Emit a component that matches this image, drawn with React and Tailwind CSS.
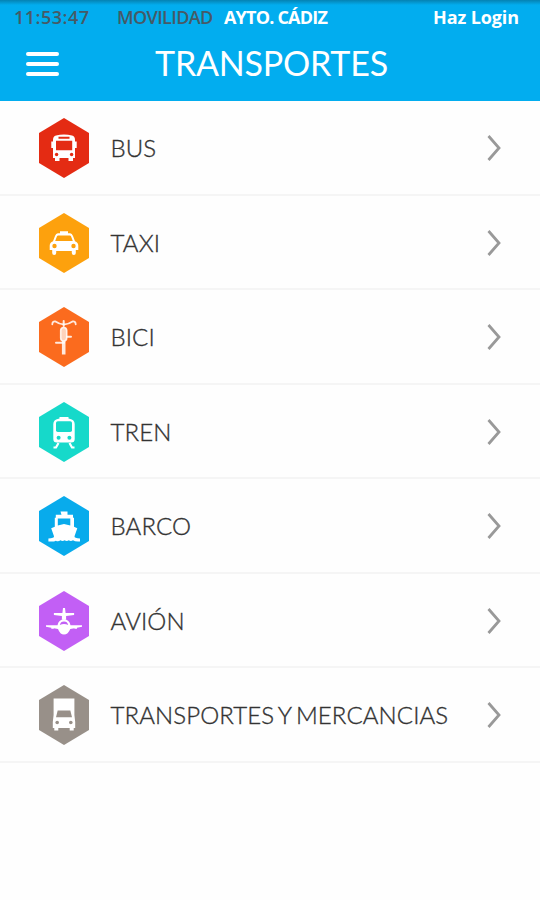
import React from "react";

const icons = {
  bus: (c) => (
    <>
      <path fill="#fff" d="M17 17.5Q25 15.5 33 17.5Q36 18.3 36 22V23.5H37.7V30H36V40H34V43H29.5V40H20.5V43H16V40H14V30H12.3V23.5H14V22Q14 18.3 17 17.5Z" />
      <path fill={c} d="M19.5 18.7h11v2h-11zM17 22.7h16.2v9.6H17z" />
      <circle cx="17.6" cy="36.5" r="1.7" fill={c} />
      <circle cx="32.6" cy="36.5" r="1.7" fill={c} />
    </>
  ),
  taxi: (c) => (
    <>
      <path fill="#fff" d="M21 18.3h8v2h2.2Q33 20.5 34 23l2 5.2q3.3 1 3.3 4.5V37h-2.5v3q0 2-2 2t-2-2v-2H17.2v2q0 2-2 2t-2-2v-3h-2.5v-4.3q0-3.5 3.3-4.5l2-5.2q1-2.500 2.800-2.700H21Z" />
      <path fill={c} d="M19.300 22.500h11.400q1 0 1.400 1l1.700 4.500H16.200l1.700-4.500q.4-1 1.400-1Z" />
      <circle cx="15.5" cy="33" r="2.2" fill={c} />
      <circle cx="34.5" cy="33" r="2.2" fill={c} />
    </>
  ),
  bici: () => (
    <g stroke="#fff" fill="none" strokeLinecap="round" strokeOpacity=".85">
      <path strokeWidth="1.800" d="M13.300 17.300Q13.300 14 16.500 14.500Q21 17.600 25 17.300Q29 17.600 33.500 14.500Q36.700 14 36.700 17.300" />
      <path strokeWidth="2" d="M24.700 14v5" />
      <rect x="21.700" y="20.500" width="6" height="13.500" rx="3" strokeWidth="1.600" fill="#fff" fillOpacity=".7" />
      <path strokeWidth="2" d="M28 29.800h4M17 35.700h8" />
      <path strokeWidth="3.600" strokeLinecap="butt" d="M24.700 34v13.500" />
    </g>
  ),
  tren: (c) => (
    <>
      <path fill="#fff" d="M20.500 15h9v1.500q6.200.9 6.200 5.500v15q0 3.500-3.500 3.500H17.800q-3.500 0-3.500-3.500V22q0-4.600 6.200-5.500Z" />
      <rect x="17" y="19.200" width="16" height="10.800" rx="1.800" fill={c} />
      <circle cx="19.600" cy="35.700" r="2" fill={c} />
      <circle cx="30.400" cy="35.700" r="2" fill={c} />
      <path stroke="#fff" strokeWidth="2.200" d="m19.500 41-2.500 4.500h-2.500M30.500 41l2.500 4.500h2.500" fill="none" />
    </>
  ),
  barco: (c) => (
    <>
      <path fill="#fff" d="M21.500 15.500h7v3.300h5.500v3h1v9l3.300 1.400-2.800 8q-.3 2 5.500 2.200v3q-5 .4-7-1.200-2.200 1.500-4.200 0-2 1.500-4.200 0-2 1.500-4.200 0-2.200 1.800-4.500.5-2 1.200-7.500.7v-3q6-.2 5.600-2.200l-2.800-8 3.600-1.400v-9h1v-3h5.700Z" />
      <path fill={c} d="M18.800 22.500h12.500v7L25 28l-6.200 1.500Z" />
    </>
  ),
  avion: (c) => (
    <>
      <path fill="#fff" d="M24 17h2l.6 5h8.500v1.900l-8 1.200v3.400h-4.200v-3.400l-8-1.200V22h8.500ZM7 34.200h11.500q1-5.700 6.500-5.700t6.500 5.700H43v1.600l-5 1v1h-2.500v-.6l-4.200.8Q29 43.500 25 43.500t-6-5.500l-4.200-.8v.6h-2.500v-1l-5.300-1Z" />
      <path fill={c} d="M20.800 34q.8-3.400 4.200-3.400t4.200 3.400q-4.200-1.800-8.400 0Z" />
    </>
  ),
  camion: (c) => (
    <>
      <path fill="#fff" d="M14.600 13.500h20.800V30l.8 7v6h-1.500v2.500h-4V43H19.300v2.500h-4V43h-1.500v-6l.8-7Z" />
      <path fill={c} d="M18.700 25.500h12.600l1.700 6.700H17Z" />
      <circle cx="18.200" cy="37.500" r="1.800" fill={c} />
      <circle cx="31.800" cy="37.500" r="1.800" fill={c} />
    </>
  ),
};

const rows = [
  { icon: "bus", label: "BUS", color: "#e42b13" },
  { icon: "taxi", label: "TAXI", color: "#fda10d" },
  { icon: "bici", label: "BICI", color: "#fb6b1e" },
  { icon: "tren", label: "TREN", color: "#16d9ca" },
  { icon: "barco", label: "BARCO", color: "#08abec" },
  { icon: "avion", label: "AVIÓN", color: "#c25ff5" },
  { icon: "camion", label: "TRANSPORTES Y MERCANCIAS", color: "#989089" },
];

function Row({ icon, label, color }) {
  return (
    <li className="flex h-[94.5px] items-center border-b-2 border-[#f5f5f5] pl-[39px] pr-[38px] pt-[2px]">
      <svg viewBox="0 0 50 60" className="h-[60px] w-[50px] shrink-0">
        <path fill={color} d="M25 0 50 15V45L25 60 0 45V15Z" />
        {icons[icon](color)}
      </svg>
      <span className="ml-[21.5px] grow whitespace-nowrap text-[24px] font-light leading-8 tracking-[0.1px] text-[#333] [-webkit-text-stroke:0.35px_#333] [word-spacing:-2px]">{label}</span>
      <svg viewBox="0 0 16 28" className="h-7 w-4 shrink-0" fill="none" stroke="#999" strokeWidth="2.800">
        <path d="M2.500 2 13 14 2.500 26" />
      </svg>
    </li>
  );
}

export default function App() {
  return (
    <div className="h-[900px] w-[540px] overflow-hidden bg-[#fefefe] font-[Lato,sans-serif]">
      <header className="h-[101px] bg-[#02adef]">
        <div className="flex h-[35px] items-center whitespace-nowrap bg-linear-to-b from-[#0582b2] to-[#02adef] to-[5px] pl-[14px] pr-[21px] font-['Open_Sans',sans-serif] text-[18px] font-semibold text-white">
          <span className="w-[103px] tracking-[0.5px] text-[#465a66]">11:53:47</span>
          <span className="w-[107px] tracking-[-0.6px] text-[#465a66]">MOVILIDAD</span>
          <span className="font-bold tracking-[-0.8px]">AYTO. CÁDIZ</span>
          <span className="ml-auto font-bold tracking-[-0.1px]">Haz Login</span>
        </div>
        <div className="flex h-[58px] items-center pl-[26px]">
          <div className="flex flex-col gap-[6px]">
            <i className="h-1 w-[33px] rounded-full bg-white" />
            <i className="h-1 w-[33px] rounded-full bg-white" />
            <i className="h-1 w-[33px] rounded-full bg-white" />
          </div>
          <h1 className="mb-[3px] ml-[96px] text-[34px] leading-10 tracking-[-0.2px] text-white">TRANSPORTES</h1>
        </div>
      </header>
      <ul>
        {rows.map((r) => (
          <Row key={r.icon} {...r} />
        ))}
      </ul>
    </div>
  );
}
